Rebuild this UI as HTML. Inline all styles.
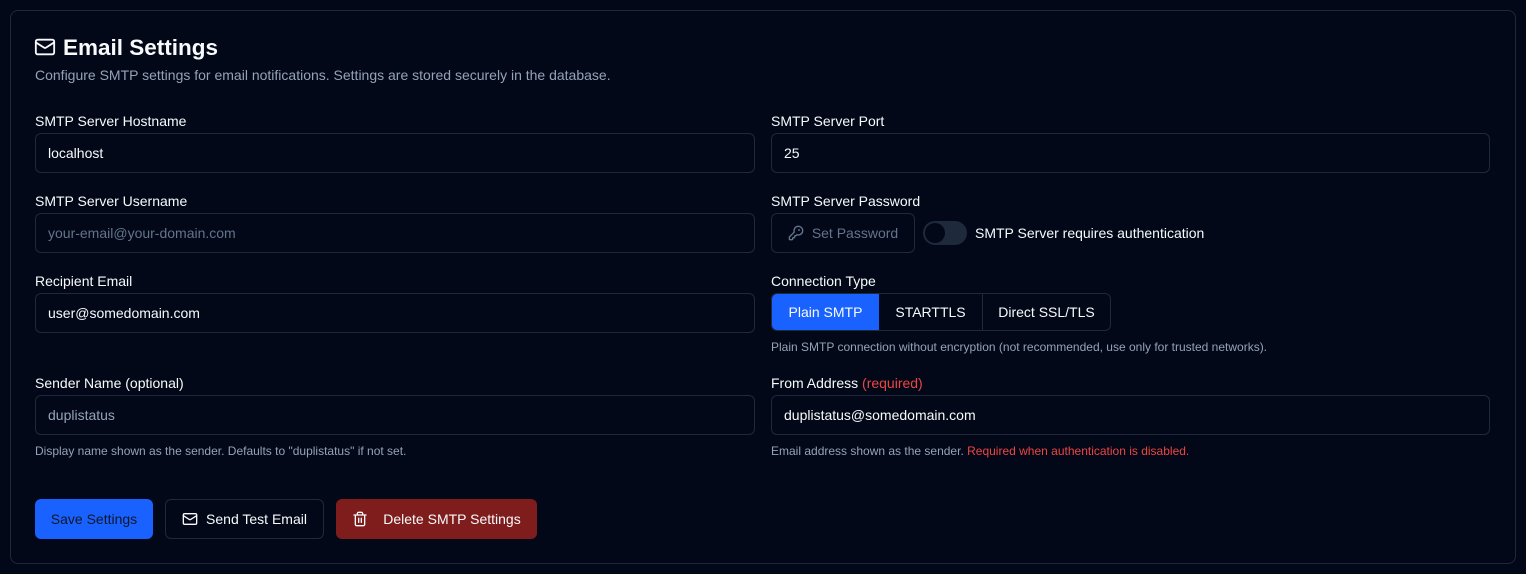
<!DOCTYPE html>
<html><head><style>
*{box-sizing:border-box;margin:0;padding:0}
body{width:1526px;height:574px;background:#020817;font-family:"Liberation Sans",sans-serif;color:#f8fafc;position:relative;overflow:hidden}
.card{position:absolute;left:10px;top:10px;width:1506px;height:554px;border:1px solid #1e293b;border-radius:8px}
.a{position:absolute}
.lbl{font-size:14px;color:#f8fafc;line-height:16px}
.inp{position:absolute;height:40px;border:1px solid #1e293b;border-radius:6px;font-size:14px;padding-left:12px;line-height:38px;color:#f8fafc}
.ph{color:#64748b}
.help{font-size:12px;color:#94a3b8;line-height:14px}
.btn{position:absolute;height:40px;border-radius:6px;font-size:14px;display:flex;align-items:center;justify-content:center;gap:8px}
</style></head><body>
<div class="card"></div>
<svg class="a" style="left:34px;top:36px" width="22" height="22" viewBox="0 0 24 24" fill="none" stroke="#f8fafc" stroke-width="2" stroke-linecap="round" stroke-linejoin="round"><rect x="2" y="4" width="20" height="16" rx="2"/><path d="m22 7-8.97 5.7a1.94 1.94 0 0 1-2.06 0L2 7"/></svg>
<div class="a" style="left:63px;top:34px;font-size:22.5px;font-weight:bold;line-height:28px">Email Settings</div>
<div class="a" style="left:35px;top:67px;font-size:14px;color:#94a3b8;line-height:16px">Configure SMTP settings for email notifications. Settings are stored securely in the database.</div>

<div class="a lbl" style="left:35px;top:113px">SMTP Server Hostname</div>
<div class="inp" style="left:35px;top:133px;width:720px">localhost</div>
<div class="a lbl" style="left:771px;top:113px">SMTP Server Port</div>
<div class="inp" style="left:771px;top:133px;width:719px">25</div>

<div class="a lbl" style="left:35px;top:193px">SMTP Server Username</div>
<div class="inp ph" style="left:35px;top:213px;width:720px">your-email@your-domain.com</div>
<div class="a lbl" style="left:771px;top:193px">SMTP Server Password</div>
<div class="btn" style="left:771px;top:213px;width:144px;border:1px solid #1e293b;color:#64748b"><svg width="16" height="16" viewBox="0 0 24 24" fill="none" stroke="#64748b" stroke-width="2" stroke-linecap="round" stroke-linejoin="round"><path d="M2.586 17.414A2 2 0 0 0 2 18.828V21a1 1 0 0 0 1 1h3a1 1 0 0 0 1-1v-1a1 1 0 0 1 1-1h1a1 1 0 0 0 1-1v-1a1 1 0 0 1 1-1h.172a2 2 0 0 0 1.414-.586l.814-.814a6.5 6.5 0 1 0-4-4z"/><circle cx="16.5" cy="7.5" r=".5"/></svg>Set Password</div>
<div class="a" style="left:923px;top:221px;width:44px;height:24px;border-radius:12px;background:#1e293b"><div class="a" style="left:2px;top:2px;width:20px;height:20px;border-radius:50%;background:#020817"></div></div>
<div class="a lbl" style="left:975px;top:225px">SMTP Server requires authentication</div>

<div class="a lbl" style="left:35px;top:273px">Recipient Email</div>
<div class="inp" style="left:35px;top:293px;width:720px">user@somedomain.com</div>
<div class="a lbl" style="left:771px;top:273px">Connection Type</div>
<div class="a" style="left:771px;top:293px;width:340px;height:38px;border:1px solid #1e293b;border-radius:6px;overflow:hidden;display:flex;font-size:14px">
<div style="width:107px;background:#1a62ff;display:flex;align-items:center;justify-content:center">Plain SMTP</div>
<div style="width:104px;border-right:1px solid #1e293b;display:flex;align-items:center;justify-content:center">STARTTLS</div>
<div style="flex:1;display:flex;align-items:center;justify-content:center">Direct SSL/TLS</div></div>
<div class="a help" style="left:771px;top:340px">Plain SMTP connection without encryption (not recommended, use only for trusted networks).</div>

<div class="a lbl" style="left:35px;top:375px">Sender Name (optional)</div>
<div class="inp ph" style="left:35px;top:395px;width:720px;color:#94a3b8">duplistatus</div>
<div class="a help" style="left:35px;top:444px">Display name shown as the sender. Defaults to "duplistatus" if not set.</div>
<div class="a lbl" style="left:771px;top:375px">From Address <span style="color:#ef4444">(required)</span></div>
<div class="inp" style="left:771px;top:395px;width:719px">duplistatus@somedomain.com</div>
<div class="a help" style="left:771px;top:444px">Email address shown as the sender. <span style="color:#ef4444">Required when authentication is disabled.</span></div>

<div class="btn" style="left:35px;top:499px;width:118px;background:#1a62ff;color:#0f172a">Save Settings</div>
<div class="btn" style="left:165px;top:499px;width:159px;border:1px solid #1e293b"><svg width="16" height="16" viewBox="0 0 24 24" fill="none" stroke="#f8fafc" stroke-width="2" stroke-linecap="round" stroke-linejoin="round"><rect x="2" y="4" width="20" height="16" rx="2"/><path d="m22 7-8.97 5.7a1.94 1.94 0 0 1-2.06 0L2 7"/></svg>Send Test Email</div>
<div class="btn" style="left:336px;top:499px;width:201px;background:#7f1d1d;gap:15px"><svg width="16" height="16" viewBox="0 0 24 24" fill="none" stroke="#f8fafc" stroke-width="2" stroke-linecap="round" stroke-linejoin="round"><path d="M3 6h18"/><path d="M19 6v14c0 1-1 2-2 2H7c-1 0-2-1-2-2V6"/><path d="M8 6V4c0-1 1-2 2-2h4c1 0 2 1 2 2v2"/><line x1="10" x2="10" y1="11" y2="17"/><line x1="14" x2="14" y1="11" y2="17"/></svg>Delete SMTP Settings</div>
</body></html>
